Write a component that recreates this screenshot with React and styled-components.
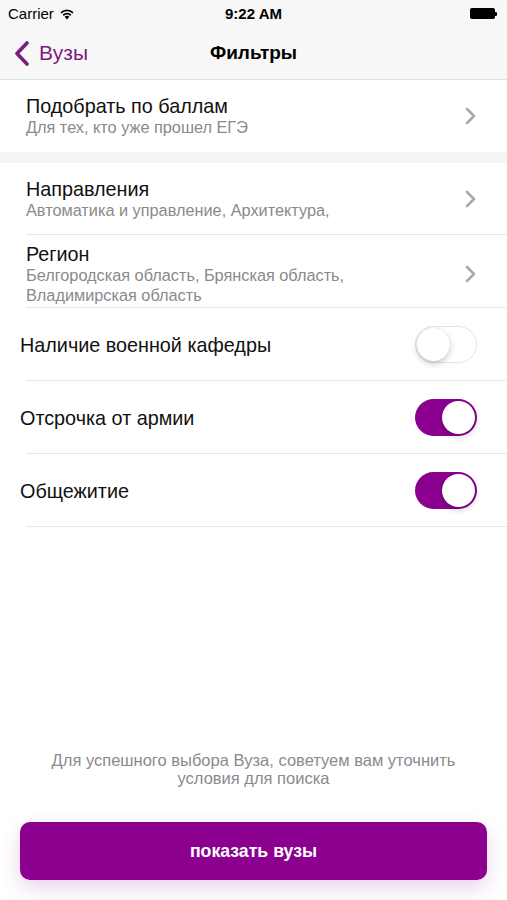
import React from "react";
import styled, { createGlobalStyle } from "styled-components";

const Global = createGlobalStyle`
  html, body { margin: 0; padding: 0; background: #fff; }
  body { font-family: "Liberation Sans", Arial, sans-serif; -webkit-font-smoothing: antialiased; }
  * { box-sizing: border-box; }
`;

const PURPLE = "#8c008f";

const Page = styled.div`
  width: 507px;
  height: 900px;
  display: flex;
  flex-direction: column;
  background: #fff;
  overflow: hidden;
`;

const Header = styled.header`
  background: #f7f7f7;
  border-bottom: 1px solid #dedede;
  box-shadow: 0 1px 2px rgba(0,0,0,0.04);
`;

const StatusBar = styled.div`
  height: 27px;
  display: grid;
  grid-template-columns: 1fr auto 1fr;
  align-items: center;
  padding: 0 8px;
  font-size: 15px;
  color: #000;
`;

const Carrier = styled.div`
  display: flex;
  align-items: center;
  gap: 5px;
`;

const Time = styled.div`
  font-weight: 700;
  font-size: 15px;
`;

const Battery = styled.div`
  justify-self: end;
  display: flex;
  align-items: center;
  margin-right: 2px;
`;

const BatteryBody = styled.div`
  width: 25px;
  height: 11px;
  background: #000;
  border-radius: 2px;
`;

const BatteryTip = styled.div`
  width: 2px;
  height: 4px;
  background: #000;
  border-radius: 0 1px 1px 0;
`;

const NavBar = styled.div`
  height: 52px;
  display: grid;
  grid-template-columns: 1fr auto 1fr;
  align-items: center;
  padding: 0 14px;
`;

const Back = styled.div`
  display: flex;
  align-items: center;
  gap: 9px;
  color: #7b1c7e;
  font-size: 21px;
`;

const Title = styled.div`
  font-weight: 700;
  font-size: 19px;
  color: #000;
`;

const Section = styled.div`
  background: #fff;
`;

const Gap = styled.div`
  height: 11px;
  background: #f4f4f4;
`;

const Row = styled.div`
  position: relative;
  display: flex;
  align-items: center;
  min-height: ${(p) => p.$h || 73}px;
  padding: ${(p) => p.$pt || 0}px 30px 0 ${(p) => p.$indent || 26}px;
  ${(p) =>
    p.$sep &&
    `&::after {
      content: "";
      position: absolute;
      left: 26px;
      right: 0;
      bottom: 0;
      height: 1px;
      background: #e6e6e6;
    }`}
`;

const RowText = styled.div`
  flex: 1;
  display: flex;
  flex-direction: column;
`;

const RowTitle = styled.div`
  font-size: 19.8px;
  color: #111;
  line-height: 22px;
`;

const RowSub = styled.div`
  font-size: 16.3px;
  color: #8a8a8a;
  line-height: 20px;
`;

const SwitchTrack = styled.div`
  width: 62px;
  height: 37px;
  border-radius: 19px;
  position: relative;
  background: ${(p) => (p.$on ? PURPLE : "#fff")};
  border: ${(p) => (p.$on ? "none" : "1.5px solid #e3e3e3")};
`;

const Knob = styled.div`
  position: absolute;
  top: ${(p) => (p.$on ? 2 : 0.5)}px;
  ${(p) => (p.$on ? "right: 2px;" : "left: 0.5px;")}
  width: 33px;
  height: 33px;
  border-radius: 50%;
  background: #fff;
  box-shadow: 0 3px 6px rgba(0,0,0,0.2), 0 0 1px rgba(0,0,0,0.2);
`;

const Spacer = styled.div`
  flex: 1;
`;

const Footer = styled.div`
  padding: 0 20px 20px;
  display: flex;
  flex-direction: column;
  align-items: center;
`;

const Hint = styled.p`
  margin: 0 0 35px;
  text-align: center;
  font-size: 16.5px;
  line-height: 18px;
  color: #8a8a8e;
`;

const Button = styled.button`
  width: 100%;
  height: 58px;
  border: none;
  border-radius: 10px;
  background: ${PURPLE};
  color: #fff;
  font-family: inherit;
  font-weight: 700;
  font-size: 17.7px;
  box-shadow: 0 8px 20px rgba(140, 0, 143, 0.18);
`;

const Chevron = () => (
  <svg width="12" height="18" viewBox="0 0 12 18">
    <polyline points="2,2 9,9 2,16" fill="none" stroke="#a9a9ad" strokeWidth="2.6" strokeLinecap="round" strokeLinejoin="round" />
  </svg>
);

const BackChevron = () => (
  <svg width="16" height="25" viewBox="0 0 16 25">
    <polyline points="13,2 3,12.5 13,23" fill="none" stroke="#7b1c7e" strokeWidth="3.6" strokeLinecap="round" strokeLinejoin="round" />
  </svg>
);

const Wifi = () => (
  <svg width="16" height="12" viewBox="0 0 16 12">
    <path d="M8 11.5 L5.6 8.8 A3.5 3.5 0 0 1 10.4 8.8 Z" fill="#000" />
    <path d="M3.6 6.6 A6.3 6.3 0 0 1 12.4 6.6 L11.2 7.9 A4.6 4.6 0 0 0 4.8 7.9 Z" fill="#000" />
    <path d="M1.4 4.2 A9.4 9.4 0 0 1 14.6 4.2 L13.4 5.5 A7.7 7.7 0 0 0 2.6 5.5 Z" fill="#000" />
  </svg>
);

const Switch = ({ on }) => (
  <SwitchTrack $on={on}>
    <Knob $on={on} />
  </SwitchTrack>
);

const NavRow = ({ title, sub, h, sep, pt }) => (
  <Row $h={h} $sep={sep} $pt={pt}>
    <RowText>
      <RowTitle>{title}</RowTitle>
      {sub && <RowSub>{sub}</RowSub>}
    </RowText>
    <Chevron />
  </Row>
);

const ToggleRow = ({ title, on }) => (
  <Row $indent={20} $sep $h={73}>
    <RowText>
      <RowTitle>{title}</RowTitle>
    </RowText>
    <Switch on={on} />
  </Row>
);

export default function App() {
  return (
    <>
      <Global />
      <Page>
        <Header>
          <StatusBar>
            <Carrier>
              Carrier <Wifi />
            </Carrier>
            <Time>9:22 AM</Time>
            <Battery>
              <BatteryBody />
              <BatteryTip />
            </Battery>
          </StatusBar>
          <NavBar>
            <Back>
              <BackChevron />
              Вузы
            </Back>
            <Title>Фильтры</Title>
            <div />
          </NavBar>
        </Header>
        <Section>
          <NavRow title="Подобрать по баллам" sub="Для тех, кто уже прошел ЕГЭ" h={72} />
        </Section>
        <Gap />
        <Section>
          <NavRow title="Направления" sub="Автоматика и управление, Архитектура," h={72} sep />
          <NavRow
            title="Регион"
            sub={
              <>
                Белгородская область, Брянская область,
                <br />
                Владимирская область
              </>
            }
            h={73}
            pt={4}
            sep
          />
          <ToggleRow title="Наличие военной кафедры" on={false} />
          <ToggleRow title="Отсрочка от армии" on />
          <ToggleRow title="Общежитие" on />
        </Section>
        <Spacer />
        <Footer>
          <Hint>
            Для успешного выбора Вуза, советуем вам уточнить
            <br />
            условия для поиска
          </Hint>
          <Button>показать вузы</Button>
        </Footer>
      </Page>
    </>
  );
}
